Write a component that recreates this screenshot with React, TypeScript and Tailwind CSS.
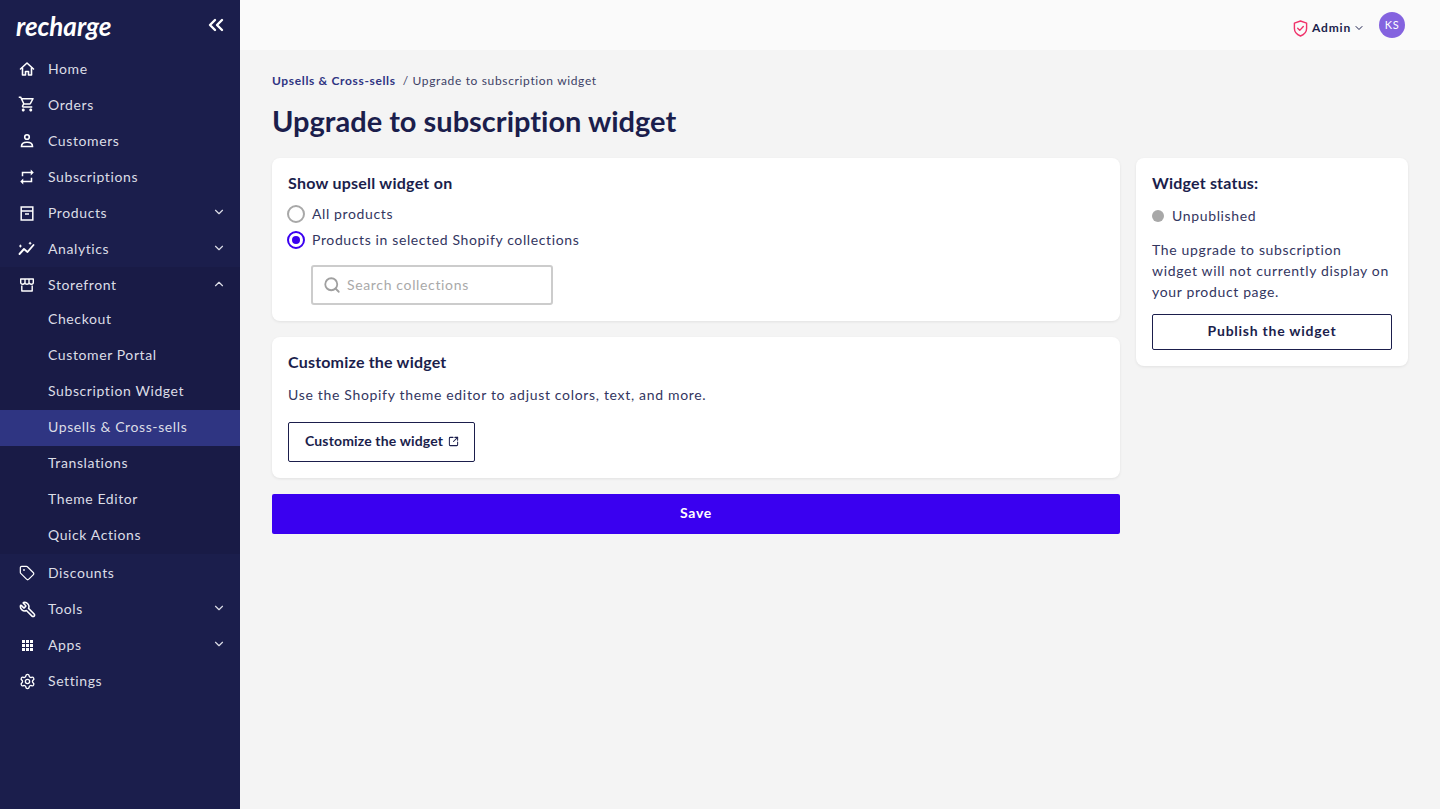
import { ChevronDown, ChevronUp, ChevronsLeft, Search, Settings, SquareArrowOutUpRight, Tag, Wrench } from 'lucide-react';
import type { ReactNode } from 'react';

const FONT = "font-['Lato','Noto_Sans',sans-serif]";
const ACTIVE_ITEM = 'Upsells & Cross-sells';

function HomeIcon() {
  return (
    <svg viewBox="0 0 16 16" className="w-4 h-4" fill="none" stroke="currentColor" strokeWidth="1.6" strokeLinejoin="round" strokeLinecap="round">
      <path d="M1.5 8L8 2l6.5 6" />
      <path d="M3.5 7v7h3v-3.5h3V14h3V7" />
    </svg>
  );
}

function CartIcon() {
  return (
    <svg viewBox="0 0 24 24" className="w-[18px] h-[18px] -mt-0.5" fill="currentColor">
      <path d="M15.55 13c.75 0 1.41-.41 1.75-1.03l3.58-6.49A.996.996 0 0 0 20.01 4H5.21l-.94-2H1v2h2l3.6 7.59-1.35 2.44C4.52 15.37 5.48 17 7 17h12v-2H7l1.1-2h7.45zM6.16 6h12.15l-2.76 5H8.53L6.16 6zM7 18c-1.1 0-1.99.9-1.99 2S5.9 22 7 22s2-.9 2-2-.9-2-2-2zm10 0c-1.1 0-1.99.9-1.99 2s.89 2 1.99 2 2-.9 2-2-.9-2-2-2z" />
    </svg>
  );
}

function CustomerIcon() {
  return (
    <svg viewBox="0 0 16 16" className="w-4 h-4" fill="none" stroke="currentColor" strokeWidth="1.6">
      <circle cx="8" cy="4" r="2.3" />
      <path d="M2.5 13.5c0-3 2.5-4.2 5.5-4.2s5.5 1.2 5.5 4.2z" />
    </svg>
  );
}

function RepeatIcon() {
  return (
    <svg viewBox="0 0 24 24" className="w-[18px] h-[18px]" fill="currentColor">
      <path d="M7 7h10v3l4-4-4-4v3H5v6h2V7zm10 10H7v-3l-4 4 4 4v-3h12v-6h-2v4z" />
    </svg>
  );
}

function ProductIcon() {
  return (
    <svg viewBox="0 0 14 15" className="w-3.5 h-[15px]" fill="none" stroke="currentColor" strokeWidth="1.5">
      <rect x="1.2" y="1" width="11.6" height="13" />
      <path d="M1.2 5h11.6M5 8h4" />
    </svg>
  );
}

function AnalyticsIcon() {
  return (
    <svg viewBox="0 0 18 16" className="w-[18px] h-4 -mt-px" fill="none" stroke="currentColor" strokeWidth="1.9" strokeLinecap="round" strokeLinejoin="round">
      <path d="M1.5 13l4.5-5 3.5 3 6-7" />
      <path d="M1.5 5h1.8M2.4 4.1v1.8M11.2 2.2H13M12.1 1.3v1.8" strokeWidth="1.1" />
    </svg>
  );
}

function StoreIcon() {
  return (
    <svg viewBox="0 0 16 16" className="w-4 h-4" fill="none" stroke="currentColor" strokeWidth="1.4" strokeLinejoin="round">
      <path d="M1.7 2h12.600v3.500c0 1-.8 1.700-1.900 1.700-.9 0-1.600-.4-2.100-1-.4.6-1.200 1-2.300 1s-1.900-.4-2.300-1c-.5.6-1.200 1-2.100 1-1.100 0-1.900-.7-1.900-1.700z" />
      <path d="M6 2v4M10 2v4" />
      <path d="M2.800 8.500V14h10.400V8.500" />
    </svg>
  );
}

function AppsIcon() {
  return (
    <svg viewBox="0 0 11 11" className="w-[11px] h-[11px]" fill="currentColor">
      <rect x="0" y="0" width="3" height="3" />
      <rect x="4" y="0" width="3" height="3" />
      <rect x="8" y="0" width="3" height="3" />
      <rect x="0" y="4" width="3" height="3" />
      <rect x="4" y="4" width="3" height="3" />
      <rect x="8" y="4" width="3" height="3" />
      <rect x="0" y="8" width="3" height="3" />
      <rect x="4" y="8" width="3" height="3" />
      <rect x="8" y="8" width="3" height="3" />
    </svg>
  );
}

function ShieldIcon() {
  return (
    <svg viewBox="0 0 16 18" className="w-[15px] h-[17px]" fill="none" stroke="#f0326a" strokeWidth="1.5" strokeLinecap="round" strokeLinejoin="round">
      <path d="M8 1l6.5 2.2V9c0 3.8-2.8 6.5-6.5 8-3.700-1.500-6.500-4.200-6.500-8V3.200z" />
      <path d="M5 8.800l2.200 2.200L11 6.800" />
    </svg>
  );
}

function NavRow({ icon, label, chevron, short }: { icon: ReactNode; label: string; chevron?: 'up' | 'down'; short?: boolean }) {
  return (
    <div className={`${short ? 'h-[35px]' : 'h-9'} flex items-center pl-[18px] pr-[14px] text-[#dcdde6]`}>
      <span className="w-[18px] flex justify-center text-white">{icon}</span>
      <span className="ml-3 text-sm tracking-[0.6px] flex-1">{label}</span>
      {chevron === 'down' && <ChevronDown className="w-3.5 h-3.5 -mt-0.5" />}
      {chevron === 'up' && <ChevronUp className="w-3.5 h-3.5 -mt-0.5" />}
    </div>
  );
}

const SUB_ITEMS = ['Checkout', 'Customer Portal', 'Subscription Widget', ACTIVE_ITEM, 'Translations', 'Theme Editor', 'Quick Actions'];

function Sidebar() {
  return (
    <aside className="w-60 shrink-0 bg-[#1b1e4c] min-h-[809px]">
      <div className="h-[51px] flex items-center justify-between pl-4 pr-3">
        <span className="text-white text-[26px] font-bold italic leading-none">recharge</span>
        <ChevronsLeft className="w-6 h-6 -mt-0.5 text-white" strokeWidth={2.4} />
      </div>
      <NavRow icon={<HomeIcon />} label="Home" />
      <NavRow icon={<CartIcon />} label="Orders" />
      <NavRow icon={<CustomerIcon />} label="Customers" />
      <NavRow icon={<RepeatIcon />} label="Subscriptions" />
      <NavRow icon={<ProductIcon />} label="Products" chevron="down" />
      <NavRow icon={<AnalyticsIcon />} label="Analytics" chevron="down" />
      <div className="bg-[#191b46] mb-px">
        <NavRow icon={<StoreIcon />} label="Storefront" chevron="up" short />
        {SUB_ITEMS.map((item) => (
          <div
            key={item}
            className={
              item === ACTIVE_ITEM
                ? 'h-9 pb-0.5 flex items-center pl-12 text-sm tracking-[0.6px] text-[#dcdde6] bg-[#2f3582]'
                : 'h-9 pb-0.5 flex items-center pl-12 text-sm tracking-[0.6px] text-[#dcdde6]'
            }
          >
            {item}
          </div>
        ))}
      </div>
      <NavRow icon={<Tag className="w-4 h-4" strokeWidth={1.8} />} label="Discounts" />
      <NavRow icon={<Wrench className="w-[17px] h-[17px] -scale-x-100" strokeWidth={2.2} />} label="Tools" chevron="down" />
      <NavRow icon={<AppsIcon />} label="Apps" chevron="down" />
      <NavRow icon={<Settings className="w-[17px] h-[17px]" strokeWidth={1.9} />} label="Settings" />
    </aside>
  );
}

function Card({ children, className }: { children: ReactNode; className?: string }) {
  return <div className={`bg-white rounded-lg shadow-[0_1px_3px_rgba(0,0,0,0.08)] p-4 ${className ?? ''}`}>{children}</div>;
}

export default function App() {
  return (
    <div className={`${FONT} [font-variant-ligatures:none] flex min-h-screen bg-[#f4f4f4] text-[#1b1e4c]`}>
      <Sidebar />
      <div className="flex-1 min-w-0">
        {/* Top bar */}
        <div className="h-[50px] bg-[#fafafa] flex items-center justify-end pr-[35px]">
          <div className="flex items-center pt-1.5">
            <ShieldIcon />
            <span className="ml-1 text-xs font-bold tracking-[0.8px]">Admin</span>
            <ChevronDown className="w-3 h-3 ml-0.5" />
          </div>
          <span className="ml-[14px] w-[26px] h-[26px] rounded-full bg-[#8463df] text-white text-[11px] tracking-[0.5px] flex items-center justify-center">KS</span>
        </div>

        <div className="pl-8 pr-8 pt-[23px]">
          <div className="text-xs tracking-[0.65px] h-4 flex items-center">
            <span className="font-bold text-[#2f3582]">Upsells &amp; Cross-sells</span>
            <span className="ml-[7px] text-[#3c3f66]">/ Upgrade to subscription widget</span>
          </div>
          <h1 className="mt-[14px] text-[29px] leading-9 font-bold">Upgrade to subscription widget</h1>

          <div className="mt-[19px] flex gap-4 items-start">
            <div className="flex-1 min-w-0 flex flex-col gap-4">
              <Card>
                <h2 className="-mt-px text-base leading-5 tracking-[0.25px] font-bold">Show upsell widget on</h2>
                <div className="mt-3 flex flex-col gap-2 text-sm tracking-[0.62px] text-[#33365f]">
                  <label className="h-[18px] flex items-center">
                    <span className="w-[18px] h-[18px] -ml-[1px] rounded-full border-2 border-[#a8a8a8] bg-white" />
                    <span className="ml-[7px]">All products</span>
                  </label>
                  <label className="h-[18px] flex items-center">
                    <span className="w-[18px] h-[18px] -ml-[1px] rounded-full border-2 border-[#3a00f0] bg-white flex items-center justify-center">
                      <span className="w-2 h-2 rounded-full bg-[#3a00f0]" />
                    </span>
                    <span className="ml-[7px]">Products in selected Shopify collections</span>
                  </label>
                </div>
                <div className="mt-4 ml-[23px] w-[242px] h-10 border-2 border-[#cccccc] rounded-[3px] flex items-center pl-2.5 text-sm tracking-[0.65px] text-[#a9a9a9]">
                  <Search className="w-[18px] h-[18px] text-[#a0a0a0]" strokeWidth={2.4} />
                  <span className="ml-1.5">Search collections</span>
                </div>
              </Card>

              <Card>
                <h2 className="-mt-px text-base leading-5 tracking-[0.2px] font-bold">Customize the widget</h2>
                <p className="mt-[13px] text-sm leading-5 tracking-[0.68px] text-[#33365f]">Use the Shopify theme editor to adjust colors, text, and more.</p>
                <button className="mt-[17px] w-[187px] h-10 pb-0.5 pl-4 border border-[#1b1e4c] rounded-[2px] text-sm font-bold tracking-[0.15px] flex items-center gap-[5px]">
                  Customize the widget
                  <SquareArrowOutUpRight className="w-[11px] h-[11px]" strokeWidth={2.2} />
                </button>
              </Card>

              <button className="h-10 pb-0.5 rounded-[2px] bg-[#3a00f0] text-white text-sm font-bold tracking-[0.7px]">Save</button>
            </div>

            <Card className="w-[272px] shrink-0">
              <h2 className="-mt-px text-base leading-5 tracking-[0.2px] font-bold">Widget status:</h2>
              <div className="mt-[13px] h-5 flex items-center text-sm tracking-[0.65px] text-[#33365f]">
                <span className="w-3 h-3 rounded-full bg-[#a8a8a8]" />
                <span className="ml-2">Unpublished</span>
              </div>
              <p className="mt-[13px] text-sm leading-[21px] tracking-[0.65px] text-[#33365f]">
                The upgrade to subscription
                <br />
                widget will not currently display on
                <br />
                your product page.
              </p>
              <button className="mt-3 w-full h-9 pb-0.5 border border-[#1b1e4c] rounded-[2px] text-sm font-bold tracking-[0.75px]">Publish the widget</button>
            </Card>
          </div>
        </div>
      </div>
    </div>
  );
}
